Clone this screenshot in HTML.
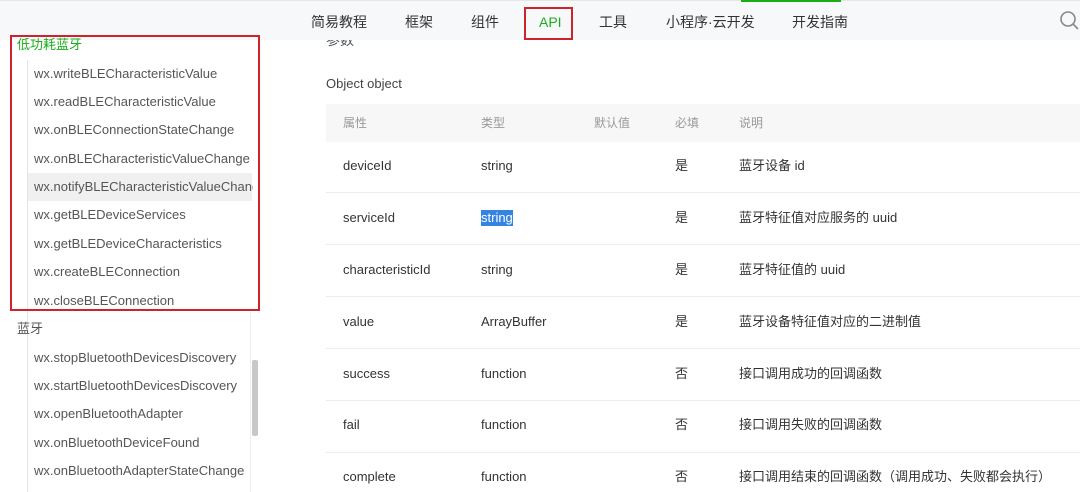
<!DOCTYPE html>
<html><head><meta charset="utf-8"><style>
*{margin:0;padding:0;box-sizing:border-box}
body{width:1080px;height:492px;overflow:hidden;background:#fff;font-family:"Liberation Sans","Noto Sans CJK SC",sans-serif;color:#353535;position:relative}
.a{position:absolute;white-space:nowrap}
.nav{position:absolute;left:0;top:0;width:1080px;height:40px;background:#f7f8f9;border-top:1px solid #e6e6e6}
.nav span{position:absolute;top:13px;font-size:14px;color:#333;line-height:16px}
.si{position:absolute;left:34px;font-size:13px;color:#555;line-height:16px}
.row{position:absolute;left:326px;width:754px;border-bottom:1px solid #ececec;height:52px}
.c{position:absolute;font-size:13px;color:#333;line-height:16px;white-space:nowrap}
</style></head><body>
<div class="nav">
<div class="a" style="left:741px;top:-1px;width:100px;height:2px;background:#1aad19"></div>
<span style="left:311px">简易教程</span>
<span style="left:405px">框架</span>
<span style="left:471px">组件</span>
<span style="left:539px;color:#1aad19">API</span>
<div class="a" style="left:524px;top:6px;width:49px;height:33px;border:2px solid #d0222a"></div>
<span style="left:599px">工具</span>
<span style="left:666px">小程序·云开发</span>
<span style="left:792px">开发指南</span>
<svg class="a" style="left:1059px;top:9px" width="20" height="20" viewBox="0 0 20 20"><circle cx="9" cy="9" r="7" fill="none" stroke="#888" stroke-width="1.6"/><path d="M14 14l5 5" stroke="#888" stroke-width="1.6"/></svg>
</div>
<!-- sidebar -->
<div class="a" style="left:27px;top:60px;width:1px;height:432px;background:#e5e5e5"></div>
<div class="a" style="left:250px;top:312px;width:1px;height:180px;background:#eee"></div>
<div class="a" style="left:252px;top:360px;width:6px;height:76px;background:#c8c8c8;border-radius:2px"></div>
<div class="a" style="left:28px;top:173px;width:224px;height:28px;background:#f0f0f0"></div>
<div class="a" style="left:10px;top:35px;width:250px;height:276px;border:2px solid #d0222a"></div>
<div class="a" style="left:17px;top:37px;font-size:13px;color:#1aad19;line-height:16px">低功耗蓝牙</div>
<div class="si" style="top:66px">wx.writeBLECharacteristicValue</div>
<div class="si" style="top:94px">wx.readBLECharacteristicValue</div>
<div class="si" style="top:122px">wx.onBLEConnectionStateChange</div>
<div class="si" style="top:151px">wx.onBLECharacteristicValueChange</div>
<div class="si" style="top:179px;width:219px;overflow:hidden">wx.notifyBLECharacteristicValueChange</div>
<div class="si" style="top:207px">wx.getBLEDeviceServices</div>
<div class="si" style="top:236px">wx.getBLEDeviceCharacteristics</div>
<div class="si" style="top:264px">wx.createBLEConnection</div>
<div class="si" style="top:293px">wx.closeBLEConnection</div>
<div class="a" style="left:17px;top:321px;font-size:13px;color:#555;line-height:16px">蓝牙</div>
<div class="si" style="top:350px">wx.stopBluetoothDevicesDiscovery</div>
<div class="si" style="top:378px">wx.startBluetoothDevicesDiscovery</div>
<div class="si" style="top:406px">wx.openBluetoothAdapter</div>
<div class="si" style="top:435px">wx.onBluetoothDeviceFound</div>
<div class="si" style="top:463px">wx.onBluetoothAdapterStateChange</div>
<!-- content -->
<div class="a" style="left:326px;top:40px;font-size:14px;color:#555;height:8px;overflow:hidden;line-height:0">参数</div>
<div class="c" style="left:326px;top:76px;color:#444">Object object</div>
<div class="a" style="left:326px;top:104px;width:754px;height:38px;background:#f7f7f7"></div>
<div class="c" style="left:343px;top:115px;font-size:12px;color:#999">属性</div>
<div class="c" style="left:481px;top:115px;font-size:12px;color:#999">类型</div>
<div class="c" style="left:594px;top:115px;font-size:12px;color:#999">默认值</div>
<div class="c" style="left:675px;top:115px;font-size:12px;color:#999">必填</div>
<div class="c" style="left:739px;top:115px;font-size:12px;color:#999">说明</div>

<div class="row" style="top:141px"></div>
<div class="row" style="top:193px"></div>
<div class="row" style="top:245px"></div>
<div class="row" style="top:297px"></div>
<div class="row" style="top:349px"></div>
<div class="row" style="top:401px"></div>

<div class="c" style="left:343px;top:158px">deviceId</div><div class="c" style="left:481px;top:158px">string</div><div class="c" style="left:675px;top:158px">是</div><div class="c" style="left:739px;top:158px">蓝牙设备 id</div>
<div class="c" style="left:343px;top:210px">serviceId</div><div class="c" style="left:481px;top:210px;background:#3584e4;color:#fff">string</div><div class="c" style="left:675px;top:210px">是</div><div class="c" style="left:739px;top:210px">蓝牙特征值对应服务的 uuid</div>
<div class="c" style="left:343px;top:262px">characteristicId</div><div class="c" style="left:481px;top:262px">string</div><div class="c" style="left:675px;top:262px">是</div><div class="c" style="left:739px;top:262px">蓝牙特征值的 uuid</div>
<div class="c" style="left:343px;top:314px">value</div><div class="c" style="left:481px;top:314px">ArrayBuffer</div><div class="c" style="left:675px;top:314px">是</div><div class="c" style="left:739px;top:314px">蓝牙设备特征值对应的二进制值</div>
<div class="c" style="left:343px;top:366px">success</div><div class="c" style="left:481px;top:366px">function</div><div class="c" style="left:675px;top:366px">否</div><div class="c" style="left:739px;top:366px">接口调用成功的回调函数</div>
<div class="c" style="left:343px;top:417px">fail</div><div class="c" style="left:481px;top:417px">function</div><div class="c" style="left:675px;top:417px">否</div><div class="c" style="left:739px;top:417px">接口调用失败的回调函数</div>
<div class="c" style="left:343px;top:469px">complete</div><div class="c" style="left:481px;top:469px">function</div><div class="c" style="left:675px;top:469px">否</div><div class="c" style="left:739px;top:469px">接口调用结束的回调函数（调用成功、失败都会执行）</div>
</body></html>
